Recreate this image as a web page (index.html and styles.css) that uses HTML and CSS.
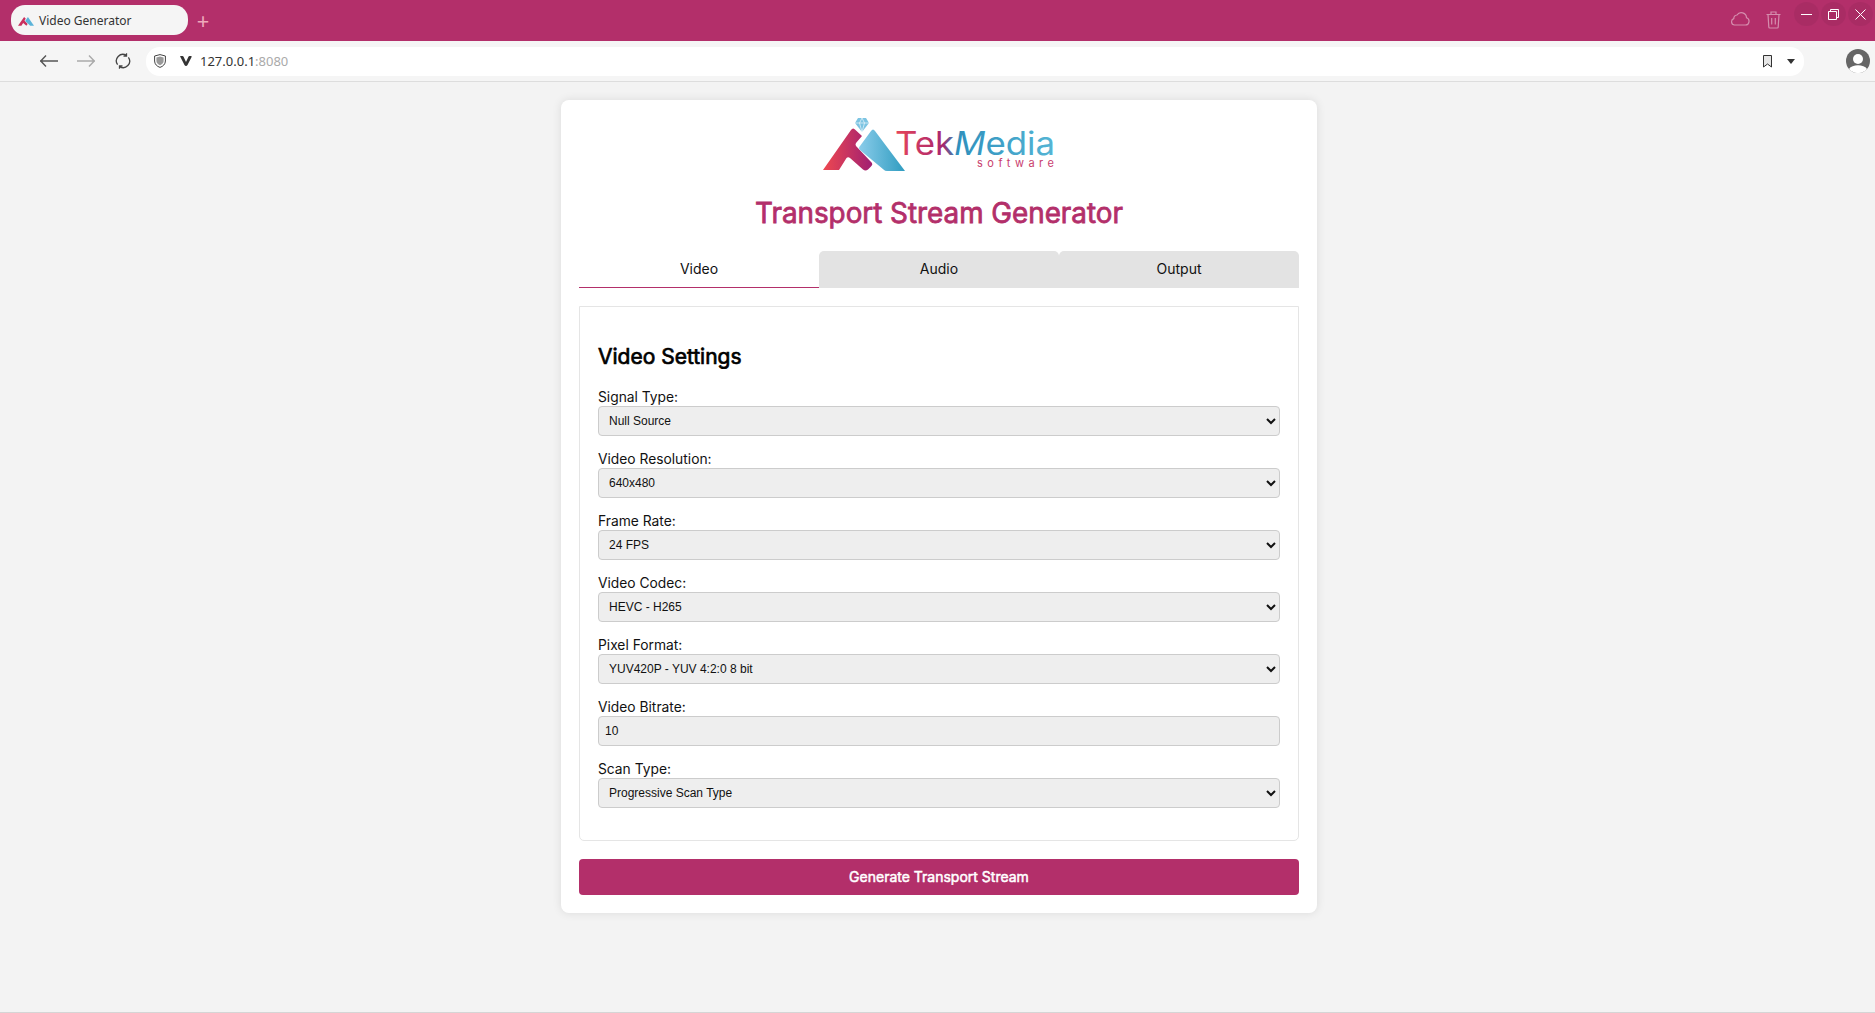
FILE: index.html
```html
<!DOCTYPE html>
<html lang="en">
	<head>
		<meta charset="UTF-8">
		<title>Video Generator</title>
		<link rel="stylesheet" href="styles.css">
	</head>
	<body>
		<div class="tabbar">
			<div class="browser-tab">
				<svg class="favicon" viewBox="0 0 84 54" width="16" height="11">
					<path d="M0 54 L32 8 L41 18 L34 27 L51 46 L44 54 L27 40 L18 54 Z" fill="#c9305e"/>
					<path d="M52 8 L84 54 L64 54 L38 30 Z" fill="#5bb3d9"/>
				</svg>
				<span>Video Generator</span>
			</div>
			<div class="new-tab">+</div>
			<div class="tabbar-right">
				<svg class="faded" width="20" height="15" viewBox="0 0 20 15" fill="none" stroke="#fff" stroke-width="1.2">
					<path d="M4.5 14 H15.5 A3.7 3.7 0 0 0 16.5 6.8 A5.2 5.2 0 0 0 7 4 A3.6 3.6 0 0 0 3.8 7.6 A3.3 3.3 0 0 0 4.5 14 Z"/>
				</svg>
				<svg class="faded" width="15" height="18" viewBox="0 0 15 18" fill="none" stroke="#fff" stroke-width="1.2">
					<path d="M.5 3.5 H14.5 M5 3.5 V1 H10 V3.5 M2 3.5 L2.8 16 A1 1 0 0 0 3.8 17 H11.2 A1 1 0 0 0 12.2 16 L13 3.5 M5.7 7 V13.5 M9.3 7 V13.5"/>
				</svg>
				<div class="win-buttons">
					<div class="win-btn">
						<svg width="11" height="11" viewBox="0 0 11 11" stroke="#fff" fill="none"><path d="M0 5.5 H11"/></svg>
					</div>
					<div class="win-btn">
						<svg width="11" height="11" viewBox="0 0 11 11" stroke="#fff" fill="none"><path d="M.5 2.5 H8.5 V10.5 H.5 Z M2.5 2.5 V.5 H10.5 V8.5 H8.5"/></svg>
					</div>
					<div class="win-btn">
						<svg width="11" height="11" viewBox="0 0 11 11" stroke="#fff" fill="none"><path d="M.5 .5 L10.5 10.5 M10.5 .5 L.5 10.5"/></svg>
					</div>
				</div>
			</div>
		</div>

		<div class="toolbar">
			<svg class="back" width="18" height="12" viewBox="0 0 18 12" fill="none" stroke="#555" stroke-width="1.4">
				<path d="M0 6 H18 M6 .5 L.8 6 L6 11.5"/>
			</svg>
			<svg class="forward" width="18" height="12" viewBox="0 0 18 12" fill="none" stroke="#aaa" stroke-width="1.4">
				<path d="M0 6 H18 M12 .5 L17.2 6 L12 11.5"/>
			</svg>
			<svg class="reload" width="16" height="16" viewBox="0 0 16 16" fill="none" stroke="#444" stroke-width="1.3">
				<path d="M2.600 11.700 A6.500 6.500 0 0 1 11.300 2.400 M13.400 4.300 A6.500 6.500 0 0 1 4.700 13.600 M11.500 .2 V3.200 H8.500 M4.500 15.800 V12.800 H7.500"/>
			</svg>
			<div class="address">
				<svg width="12" height="14" viewBox="0 0 12 14">
					<path d="M6 .6 L11.4 2 V7 C11.4 10.2 9 12.4 6 13.4 C3 12.4 .6 10.2 .6 7 V2 Z" fill="#fff" stroke="#444"/>
					<path d="M6 2.6 L9.6 3.5 V7 C9.6 9 8 10.4 6 11.2 C4 10.4 2.4 9 2.4 7 V3.5 Z" fill="#999"/>
				</svg>
				<svg class="vivaldi" width="12" height="10" viewBox="0 0 12 10">
					<path d="M0 1 Q0 0 1 0 H2.5 Q3.3 0 3.7 1 L6 6 L8.3 1 Q8.7 0 9.5 0 H11 Q12 0 11.6 1 L7.5 9 Q7 10 6 10 Q5 10 4.5 9 L.4 1 Z" fill="#333"/>
				</svg>
				<div class="url">127.0.0.1<span class="port">:8080</span></div>
				<div class="address-right">
					<svg width="9" height="13" viewBox="0 0 9 13" fill="#e6e6e6" stroke="#333"><path d="M.5 .5 H8.5 V12 L4.5 9 L.5 12 Z"/></svg>
					<svg width="8" height="5" viewBox="0 0 8 5"><path d="M0 0 H8 L4 5 Z" fill="#333"/></svg>
				</div>
			</div>
			<svg class="avatar" width="24" height="24" viewBox="0 0 24 24">
				<circle cx="12" cy="12" r="12" fill="#666"/>
				<circle cx="12" cy="10" r="5" fill="#fff"/>
				<path d="M3 20 C6 15 18 15 21 20 A12 12 0 0 1 3 20 Z" fill="#fff"/>
			</svg>
		</div>

		<div class="page">
			<div class="card">
				<svg class="logo" width="236" height="58" viewBox="0 0 236 58">
					<defs>
						<linearGradient id="redGrad" x1="0" x2="1" y1="0" y2="0">
							<stop offset="0" stop-color="#ee4850"/>
							<stop offset="1" stop-color="#a01f72"/>
						</linearGradient>
						<linearGradient id="blueGrad" x1="0" x2="1" y1="0" y2="0">
							<stop offset="0" stop-color="#8accea"/>
							<stop offset="1" stop-color="#2f9cc0"/>
						</linearGradient>
						<linearGradient id="textGrad" gradientUnits="userSpaceOnUse" x1="74" x2="234" y1="0" y2="0">
							<stop offset="0" stop-color="#e8465a"/>
							<stop offset="0.3" stop-color="#a8266e"/>
							<stop offset="0.38" stop-color="#2f8fbc"/>
							<stop offset="1" stop-color="#55b5d5"/>
						</linearGradient>
					</defs>
					<path d="M2 53 L30 13 Q32 10 34.500 13 L41 19 L35 26 Q34 27.500 35 29 L51 46 Q52 47.500 50 49.500 L47 52.500 Q44.500 54.500 42 52.500 L29 41 Q27 39.500 25.500 41 L18 53 Z" fill="url(#redGrad)"/>
					<path d="M50 14 Q52 11 54 14 L84 54 L66 54 Q64 54 62.500 52.500 L39 33 Q37 31 39 29 Z" fill="url(#blueGrad)"/>
					<path d="M37 1 H45 L48 6 L41 15 L34 6 Z" fill="#7cc4e2"/>
					<path d="M34 6 H48 M38.500 6 L41 15 L43.500 6 L41 1 L38.500 6" fill="none" stroke="#fff" stroke-width=".6"/>
					<text class="logo-name" x="74" y="38" fill="url(#textGrad)" textLength="160" lengthAdjust="spacingAndGlyphs">Tek<tspan font-style="italic">M</tspan>edia</text>
					<text class="logo-sub" x="156" y="50" textLength="77" lengthAdjust="spacing">software</text>
				</svg>

				<h1 class="title">Transport Stream Generator</h1>

				<div class="tabs">
					<div class="tab active">Video</div>
					<div class="tab">Audio</div>
					<div class="tab">Output</div>
				</div>

				<div class="panel">
					<h2 class="panel-title">Video Settings</h2>

					<label class="field-label">Signal Type:</label>
					<select class="field"><option>Null Source</option></select>

					<label class="field-label">Video Resolution:</label>
					<select class="field"><option>640x480</option></select>

					<label class="field-label">Frame Rate:</label>
					<select class="field"><option>24 FPS</option></select>

					<label class="field-label">Video Codec:</label>
					<select class="field"><option>HEVC - H265</option></select>

					<label class="field-label">Pixel Format:</label>
					<select class="field"><option>YUV420P - YUV 4:2:0 8 bit</option></select>

					<label class="field-label">Video Bitrate:</label>
					<input class="field" type="text" value="10">

					<label class="field-label">Scan Type:</label>
					<select class="field"><option>Progressive Scan Type</option></select>
				</div>

				<button class="generate">Generate Transport Stream</button>
			</div>
		</div>
	</body>
</html>
```

FILE: styles.css
```css
* {
	margin: 0;
	padding: 0;
	box-sizing: border-box;
}

body {
	background-color: #f3f3f3;
	border-bottom: 1px solid #d5d5d5;
	font-family: Inter, "Liberation Sans", sans-serif;
	height: 1013px;
	overflow: hidden;
}

/* browser chrome */
.tabbar {
	height: 41px;
	background-color: #b32f6a;
	display: flex;
	align-items: flex-start;
	padding: 5px 0 0 11px;
}

.browser-tab {
	width: 177px;
	height: 30px;
	background-color: #f5f5f5;
	border-radius: 14px;
	display: flex;
	align-items: center;
	gap: 5px;
	padding-left: 7px;
	font: 12px "Noto Sans", sans-serif;
	color: #333;
}

.new-tab {
	width: 30px;
	text-align: center;
	color: #eab;
	font: 22px/30px "Noto Sans", sans-serif;
}

.tabbar-right {
	margin-left: auto;
	display: flex;
	align-items: flex-start;
	gap: 15px;
	padding-right: 2px;
}

.tabbar-right .faded {
	opacity: 0.45;
	margin-top: 6px;
}

.tabbar-right .faded:first-child {
	margin-right: 1px;
}

.win-buttons {
	display: flex;
	gap: 2px;
	margin-top: -3px;
	margin-left: -2px;
}

.win-btn {
	width: 25px;
	height: 24px;
	border-radius: 12px;
	background-color: rgba(0, 0, 0, 0.05);
	display: flex;
	align-items: center;
	justify-content: center;
}

.toolbar {
	height: 41px;
	background-color: #f5f5f5;
	border-bottom: 1px solid #ddd;
	display: flex;
	align-items: center;
	padding-left: 40px;
}

.back,
.forward {
	margin-right: 19px;
}

.forward {
	margin-right: 20px;
}

.reload {
	margin-right: 15px;
}

.address {
	width: 1658px;
	height: 29px;
	background-color: #fff;
	border-radius: 14px;
	display: flex;
	align-items: center;
	padding: 0 9px 0 8px;
	font: 13px "Noto Sans", sans-serif;
	color: #333;
}

.vivaldi {
	margin: 0 8px 0 14px;
}

.port {
	color: #aaa;
}

.address-right {
	margin-left: auto;
	display: flex;
	align-items: center;
	gap: 15px;
}

.avatar {
	margin-left: 42px;
}

/* page */
.page {
	display: flex;
	justify-content: center;
	padding-top: 18px;
}

.card {
	width: 756px;
	height: 813px;
	margin-left: 3px;
	background-color: #fff;
	border-radius: 8px;
	box-shadow: 0 0 10px rgba(0, 0, 0, 0.1);
	padding: 17px 18px 18px;
}

.logo {
	display: block;
	margin: 0 auto;
}

.logo-name {
	font: 400 32px Inter, sans-serif;
}

.logo-sub {
	font: 11px Inter, sans-serif;
	fill: #c9406e;
}

.title {
	font-size: 27.8px;
	font-weight: 400;
	-webkit-text-stroke: 0.8px #b32f6a;
	color: #b32f6a;
	text-align: center;
	line-height: 36px;
	margin-top: 20px;
}

.tabs {
	display: flex;
	margin-top: 20px;
}

.tab {
	flex: 1;
	height: 37px;
	background-color: #e3e3e3;
	border-radius: 5px 5px 0 0;
	text-align: center;
	font-size: 14px;
	line-height: 36px;
	color: #111;
}

.tab.active {
	background-color: #fff;
	border-bottom: 1px solid #b32f6a;
	border-radius: 0;
}

.panel {
	height: 535px;
	margin-top: 18px;
	border: 1px solid #e5e5e5;
	border-radius: 0 0 5px 5px;
	padding: 36px 18px 0;
}

.panel-title {
	font-size: 21px;
	font-weight: 400;
	-webkit-text-stroke: 0.7px #000;
	line-height: 28px;
	color: #000;
	margin-bottom: 17px;
}

.field-label {
	display: block;
	font-size: 13.8px;
	line-height: 18px;
	color: #111;
	margin-top: 14px;
}

.panel-title + .field-label {
	margin-top: 0;
}

.field {
	display: block;
	width: 100%;
	height: 30px;
	padding: 6px;
	background-color: #eee;
	border: 1px solid #ccc;
	border-radius: 4px;
	font: 12px "Liberation Sans", sans-serif;
	color: #111;
}

.generate {
	display: block;
	width: 100%;
	height: 36px;
	padding-bottom: 2px;
	margin-top: 18px;
	border: 0;
	border-radius: 4px;
	background-color: #b32f6a;
	color: #fff;
	font: 400 14px Inter, sans-serif;
	-webkit-text-stroke: 0.5px #fff;
}
```
